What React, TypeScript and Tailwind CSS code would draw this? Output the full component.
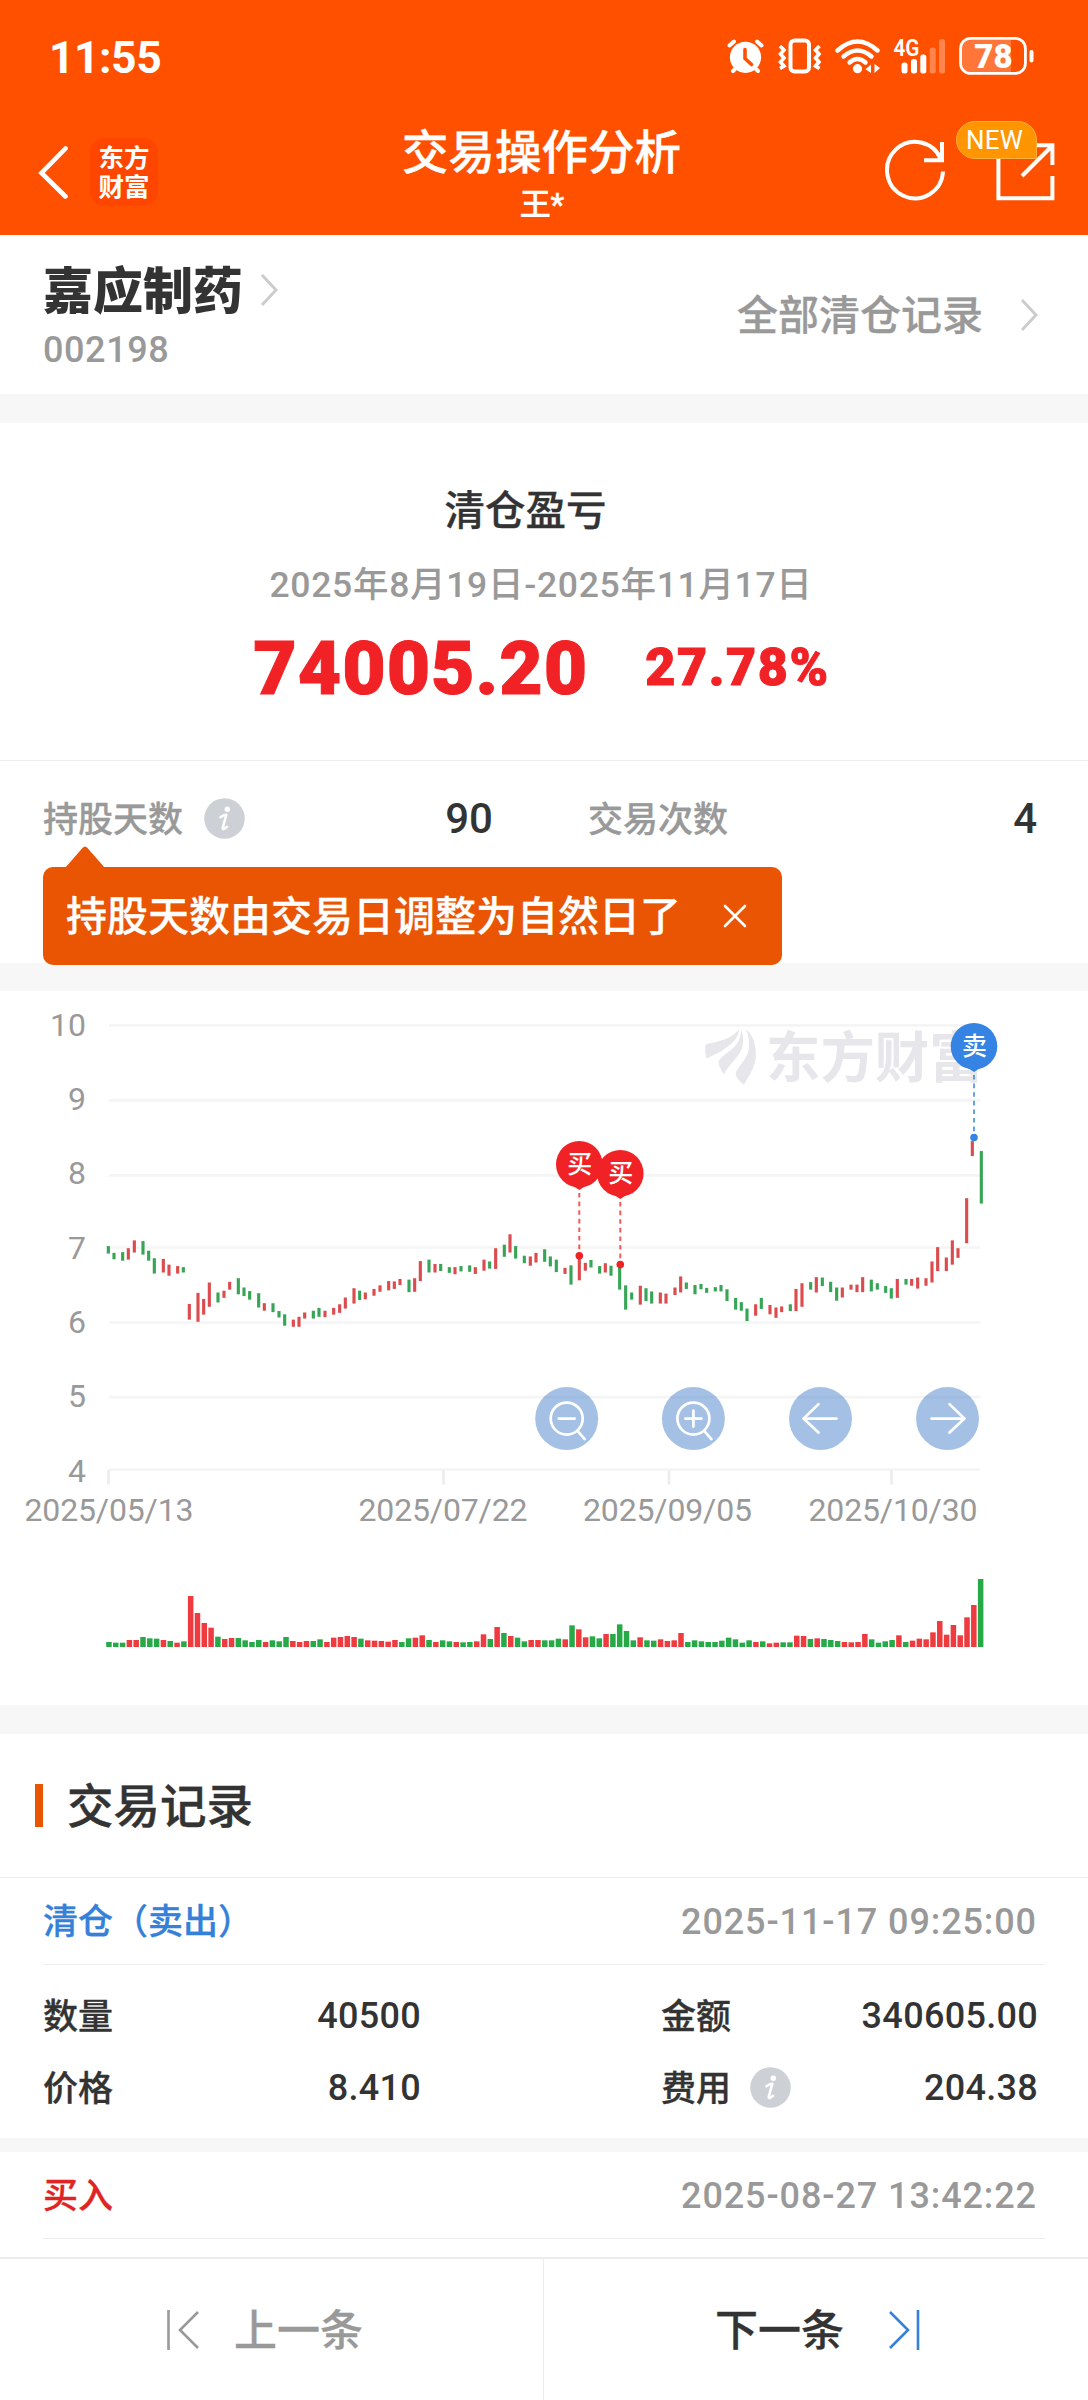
import React from 'react';

// [x, top, bottom, rising] in raw plot units, scaled by the group transform
const candles: [number, number, number, number][] = [
  [325, 745, 766, 0], [342, 764, 782, 0], [368, 762, 786, 0], [385, 751, 783, 1], [403, 729, 763, 1],
  [429, 731, 769, 0], [446, 758, 786, 0], [463, 779, 822, 0], [490, 781, 819, 1], [507, 797, 828, 1],
  [533, 801, 822, 1], [550, 804, 819, 0], [568, 907, 951, 1], [594, 876, 957, 1], [611, 893, 937, 1],
  [628, 847, 915, 1], [654, 875, 903, 0], [672, 870, 890, 1], [689, 845, 867, 1], [715, 835, 880, 0],
  [732, 861, 885, 0], [749, 871, 895, 0], [776, 877, 917, 0], [793, 905, 926, 1], [819, 905, 930, 0],
  [837, 927, 945, 0], [854, 936, 968, 0], [880, 951, 971, 1], [897, 943, 971, 1], [914, 931, 948, 1],
  [940, 926, 948, 0], [957, 918, 943, 0], [975, 926, 944, 1], [1001, 918, 937, 1], [1019, 908, 932, 1],
  [1036, 889, 920, 1], [1062, 863, 906, 1], [1079, 870, 896, 0], [1096, 875, 894, 1], [1122, 865, 884, 1],
  [1140, 855, 873, 1], [1166, 843, 869, 1], [1183, 844, 865, 1], [1200, 837, 854, 1], [1227, 839, 874, 0],
  [1244, 835, 873, 1], [1261, 787, 843, 1], [1287, 783, 819, 0], [1305, 795, 819, 1], [1322, 795, 815, 0],
  [1348, 804, 820, 0], [1365, 804, 824, 1], [1383, 801, 816, 0], [1409, 799, 817, 0], [1426, 804, 823, 1],
  [1452, 783, 814, 1], [1469, 788, 808, 0], [1487, 751, 809, 1], [1513, 741, 775, 0], [1530, 712, 763, 1],
  [1547, 745, 780, 0], [1573, 772, 793, 0], [1591, 774, 800, 1], [1608, 764, 791, 1], [1634, 754, 789, 0],
  [1651, 774, 802, 0], [1669, 783, 818, 0], [1695, 806, 823, 1], [1713, 799, 853, 0], [1738, 772, 841, 1],
  [1756, 792, 814, 1], [1773, 784, 805, 0], [1799, 801, 822, 0], [1816, 793, 819, 1], [1833, 800, 828, 0],
  [1859, 797, 867, 0], [1877, 855, 923, 0], [1895, 875, 895, 0], [1921, 856, 909, 1], [1938, 863, 899, 0],
  [1955, 872, 906, 0], [1981, 875, 906, 1], [1998, 878, 906, 1], [2025, 861, 882, 1], [2042, 830, 875, 1],
  [2059, 847, 865, 0], [2085, 854, 880, 0], [2103, 851, 866, 0], [2120, 862, 876, 0], [2146, 860, 872, 0],
  [2163, 854, 872, 0], [2181, 866, 899, 0], [2207, 890, 923, 0], [2224, 902, 926, 0], [2241, 920, 955, 0],
  [2267, 908, 940, 1], [2284, 890, 921, 0], [2310, 910, 936, 1], [2328, 917, 946, 1], [2345, 914, 930, 1],
  [2371, 908, 927, 0], [2388, 865, 927, 1], [2406, 849, 915, 1], [2432, 846, 867, 0], [2449, 832, 875, 1],
  [2467, 833, 857, 0], [2492, 845, 874, 0], [2510, 861, 898, 0], [2527, 861, 889, 1], [2553, 853, 867, 1],
  [2571, 853, 874, 1], [2588, 832, 874, 1], [2614, 839, 872, 0], [2632, 849, 867, 0], [2657, 857, 876, 0],
  [2674, 863, 892, 0], [2692, 837, 890, 1], [2718, 837, 853, 0], [2735, 837, 856, 1], [2753, 833, 864, 1],
  [2778, 835, 856, 1], [2796, 788, 847, 1], [2813, 748, 815, 1], [2839, 777, 815, 1], [2857, 729, 797, 1],
  [2874, 751, 778, 1], [2900, 611, 737, 1], [2917, 451, 493, 1], [2944, 479, 626, 0],
];

// one entry per trading day, r = rising, g = falling, number = volume
const volumes =
  'g15 g13 g13 r21 r21 g30 g26 g25 r21 g18 r13 g17 r153 r102 r72 r58 g31 r24 r27 g27 g20 g15 g21 r15 g20 g17 g30 r18 r15 r18 g18 g23 r15 r28 r30 r33 r30 g25 r20 r19 r18 r16 r21 g15 g26 r28 r35 g21 r15 g20 g17 r15 g14 g15 r17 r38 g24 r60 g42 r33 g28 g17 r21 r21 g20 g20 g25 r23 g65 r53 r29 g32 g26 r39 g39 g68 g48 g20 r29 g20 g19 r23 r18 r20 r42 g15 g20 g17 g15 g15 g19 g28 g23 g13 g20 r15 g17 r11 r13 g14 g14 r34 r33 g24 r26 g24 g21 g18 r15 r14 r15 r39 g23 g13 g17 g21 r35 g15 r19 r25 r23 r44 r78 r37 r66 r35 r89 r126 g204'
    .split(' ')
    .map((v) => ({ up: v[0] === 'r', value: Number(v.slice(1)) }));

const yAxis = [
  { label: '10', line: 34.4, base: 45 },
  { label: '9', line: 109.4, base: 119 },
  { label: '8', line: 184.4, base: 193 },
  { label: '7', line: 256.5, base: 268 },
  { label: '6', line: 331.5, base: 342 },
  { label: '5', line: 406.1, base: 416 },
  { label: '4', line: 478.6, base: 491 },
];

const xAxis = [
  { label: '2025/05/13', tick: 108.5, x: 109 },
  { label: '2025/07/22', tick: 443.5, x: 443 },
  { label: '2025/09/05', tick: 669, x: 667.5 },
  { label: '2025/10/30', tick: 891.5, x: 893 },
];

// Chinese labels: a touch heavier, and lowered so they centre with the digits
const label = 'pt-[3px] font-medium [-webkit-text-stroke:0.3px]';

function Pin({ x, top, dot, color, text }: { x: number; top: number; dot: number; color: string; text: string }) {
  return (
    <g>
      <line x1={x} x2={x} y1={top + 52} y2={dot - 3} stroke={color} strokeWidth="2" strokeDasharray="4.6 4" opacity="0.75" />
      <circle cx={x} cy={dot} r="3.8" fill={color} />
      <circle cx={x} cy={top + 23.3} r="23.3" fill={color} />
      <path d={`M${x - 17} ${top + 38} L${x} ${top + 49} L${x + 17} ${top + 38}Z`} fill={color} />
      <text x={x + 0.5} y={top + 32.3} textAnchor="middle" fontSize="25" fontWeight="500" fill="#fff">{text}</text>
    </g>
  );
}

function RoundButton({ x, children }: { x: number; children: React.ReactNode }) {
  return (
    <g transform={`translate(${x} 427.6)`}>
      <circle r="31.5" fill="rgba(57,120,199,0.46)" />
      <g fill="none" stroke="#fff" strokeWidth="2.7" strokeLinecap="round" strokeLinejoin="round">{children}</g>
    </g>
  );
}

function PriceChart() {
  return (
    <svg width="1088" height="714" viewBox="0 0 1088 714" className="block">
      {yAxis.map((t) => (
        <g key={t.label}>
          <line x1="109" x2="980.5" y1={t.line} y2={t.line} stroke="#f5f5f5" strokeWidth="2.6" />
          <text x="86" y={t.base} textAnchor="end" fontSize="32" fill="#999">{t.label}</text>
        </g>
      ))}
      {xAxis.map((t) => (
        <g key={t.label}>
          <line x1={t.tick} x2={t.tick} y1="479" y2="493.5" stroke="#ececec" strokeWidth="2.6" />
          <text x={t.x} y="529.7" textAnchor="middle" fontSize="32" fill="#999" textLength="169">{t.label}</text>
        </g>
      ))}

      {/* watermark */}
      <g fill="#e6e6eb">
        <g transform="translate(690 -11) scale(0.33333 0.35714)">
          <path d="M46 184Q48 177 60 177C95 172 130 160 147 138C145 165 122 183 92 200C76 208 62 213 49 220Q44 200 46 184Z" />
          <path d="M153 138C164 165 160 188 148 206C135 224 115 242 101 264C94 252 84 236 86 229C90 217 106 208 124 195C146 178 154 160 153 138Z" />
          <path d="M168 138C190 155 200 185 197 220C192 250 175 272 162 293C150 285 138 274 137 262C140 246 170 225 176 196C179 175 176 155 168 138Z" />
        </g>
        <text x="766" y="86" fontSize="54.4" fontWeight="700">东方财富</text>
      </g>

      <g transform="translate(0 -11) scale(0.33333 0.35714)">
        {candles.map(([x, top, bottom, up]) => (
          <rect key={x} x={x - 4.7} y={top} width="9.4" height={bottom - top} fill={up ? '#dc4b4d' : '#37a556'} />
        ))}
      </g>

      {volumes.map((v, i) => (
        <rect
          key={i}
          x={106.2 + i * 6.81}
          y={656 - v.value / 3}
          width="5.5"
          height={v.value / 3}
          fill={v.up ? '#ee3b3f' : '#28a947'}
        />
      ))}

      <Pin x={579.3} top={150} dot={264.7} color="#f12226" text="买" />
      <Pin x={620.3} top={159} dot={273.6} color="#f12226" text="买" />
      <Pin x={974} top={32} dot={146.5} color="#3583e2" text="卖" />

      <RoundButton x={566.7}>
        <circle r="16" />
        <path d="M-8 0H8M11 12.5L18 20.5" />
      </RoundButton>
      <RoundButton x={693.4}>
        <circle r="16" />
        <path d="M-8 0H8M0 -8V8M11 12.5L18 20.5" />
      </RoundButton>
      <RoundButton x={820.5}>
        <path d="M16 0H-17M-2 -14.5L-17 0L-2 14" />
      </RoundButton>
      <RoundButton x={947.5}>
        <path d="M-16 0H17M2 -14.5L17 0L2 14" />
      </RoundButton>
    </svg>
  );
}

function InfoIcon() {
  return (
    <svg width="41" height="41" viewBox="0 0 41 41" className="-mt-[2px] block shrink-0">
      <circle cx="20.5" cy="20.5" r="20.3" fill="#cdd1d6" />
      <circle cx="23.3" cy="11.2" r="2.7" fill="#fff" />
      <path d="M16.500 19.300Q20 16.500 22.300 16.800L18.800 29.500Q18.200 33 23 28.800" fill="none" stroke="#fff" strokeWidth="2.6" strokeLinecap="round" strokeLinejoin="round" />
    </svg>
  );
}

function Chevron() {
  return (
    <svg width="18" height="34" viewBox="0 0 18 34" className="block">
      <path d="M2 2L16 17L2 32" fill="none" stroke="#ccc" strokeWidth="3" />
    </svg>
  );
}

function StatusIcons() {
  return (
    <svg width="310" height="40" viewBox="725 36 310 40" className="block">
      {/* alarm */}
      <circle cx="745.5" cy="57.3" r="15.6" fill="#fff" />
      <g stroke="#fff" strokeWidth="4" strokeLinecap="round" fill="none">
        <path d="M729.5 45.5L734 41.5M761.5 45.5L757 41.5M733 71L737 67M758 71L754 67" />
        <path d="M745 49.5V58.5L751.5 64.5" stroke="#ff5000" strokeWidth="3.6" />
      </g>
      {/* vibrate */}
      <rect x="790.5" y="40.5" width="18.5" height="31" rx="4" fill="none" stroke="#fff" strokeWidth="4" />
      <path d="M780 46L784 50L780.5 54L784 58L780.5 62L784 66L780 68.5M819.5 46L815.5 50L819 54L815.5 58L819 62L815.5 66L819.5 68.5" fill="none" stroke="#fff" strokeWidth="3.6" />
      {/* wifi */}
      <g fill="none" stroke="#fff" strokeWidth="4.4" strokeLinecap="round">
        <path d="M837.5 50.5Q857.5 32.5 877.5 50.5" />
        <path d="M843.5 56.5Q857.5 44.5 871.5 56.5" />
        <path d="M849.5 62.5Q857.5 55.5 865.5 62.5" />
      </g>
      <circle cx="857.5" cy="68.7" r="4.6" fill="#fff" />
      <path d="M865.5 69.3L871 64.5V73ZM880 68L874.5 64V73Z" fill="#fff" />
      {/* signal */}
      <text x="893.5" y="56" fontSize="23" fontWeight="600" fill="#fff" textLength="26" lengthAdjust="spacingAndGlyphs">4G</text>
      <g fill="#fff">
        <rect x="901.5" y="62.5" width="6" height="11" rx="2.5" />
        <rect x="911" y="59" width="6" height="14.5" rx="2.5" />
        <rect x="920.3" y="54.5" width="6" height="19" rx="2.5" />
        <rect x="929.7" y="47.5" width="6" height="26" rx="2.5" opacity="0.3" />
        <rect x="939" y="39" width="6" height="34.5" rx="2.5" opacity="0.3" />
      </g>
      {/* battery */}
      <path d="M972 40H1011V72H972Q962 72 962 62V50Q962 40 972 40Z" fill="#fff" opacity="0.22" />
      <rect x="960.6" y="38.4" width="64.8" height="35" rx="10" fill="none" stroke="#fff" strokeWidth="2.8" />
      <rect x="1029.5" y="50" width="4" height="12.5" rx="2" fill="#fff" />
      <text x="993.5" y="68" textAnchor="middle" fontSize="33" fontWeight="900" fill="#fff">78</text>
    </svg>
  );
}

function Header() {
  return (
    <header className="h-[235px] bg-[#ff5000] text-white">
      <div className="flex h-[112px] items-center justify-between pr-[53px] pl-[49px]">
        <span className="pt-[4px] text-[44.5px] leading-none font-bold tracking-[-0.5px]">11:55</span>
        <StatusIcons />
      </div>
      <div className="relative flex h-[123px] justify-between pr-[32px] pl-[37px]">
        <div className="flex h-[119px] items-center gap-[22px]">
          <svg width="31" height="54" viewBox="0 0 31 54" className="block">
            <path d="M28.5 3.5L4.5 28L28.5 51.5" fill="none" stroke="#fff" strokeWidth="4.6" strokeLinecap="round" />
          </svg>
          <div className="flex h-[68px] w-[68px] flex-col items-center justify-center rounded-[14px] bg-[#ff4600] pt-[2px] text-[25.5px] leading-[28.5px] font-bold">
            <span>东方</span>
            <span>财富</span>
          </div>
        </div>
        <div className="absolute inset-x-0 top-[13px] flex flex-col items-center [-webkit-text-stroke:0.4px]">
          <h1 className="pr-[5px] text-[46.5px] leading-[56px] font-medium">交易操作分析</h1>
          <div className="pr-[4px] text-[31px] leading-[48px] font-medium">王*</div>
        </div>
        <div className="relative flex items-start pt-[26px]">
          <svg width="172" height="66" viewBox="884 138 172 66" className="block">
            <g fill="none" stroke="#fff" strokeWidth="4">
              <path d="M943 171.5A28 28.2 0 1 1 941 159.5" />
              <path d="M942 142V160.3H924" />
              <path d="M1036 145.3H1052.4V165M1052.4 176V198.3H998.4V150M1022 176L1052 146" />
            </g>
          </svg>
          <span className="absolute top-[9px] left-[72px] flex h-[38px] w-[81px] items-center rounded-[19px] rounded-br-none border border-[#ffb13f] bg-[#ff9500] pl-[9px] text-[26px] leading-none tracking-[0.2px]">
            NEW
          </span>
        </div>
      </div>
    </header>
  );
}

function Field({ name, value, info }: { name: string; value: string; info?: boolean }) {
  return (
    <div className="flex h-[72px] items-center justify-between">
      <div className="flex items-center gap-[19px] text-[35px] leading-none">
        <span className={label}>{name}</span>
        {info && <InfoIcon />}
      </div>
      <span className="text-[36px] leading-none tracking-[0.3px]">{value}</span>
    </div>
  );
}

function RecordHead({ name, time, color }: { name: string; time: string; color: string }) {
  return (
    <div className="mr-[43px] ml-[43px] flex h-[87px] items-center justify-between border-b border-[#ececec] pr-[8px]">
      <span className={`text-[35px] leading-none ${label} ${color}`}>{name}</span>
      <span className="pt-[1px] text-[36px] leading-none font-medium tracking-[0.9px] text-[#999]">{time}</span>
    </div>
  );
}

export default function App() {
  return (
    <div className="h-[2400px] w-[1088px] overflow-hidden bg-white font-['Roboto','Noto_Sans_CJK_SC',sans-serif] text-[#333]">
      <Header />

      <section className="flex h-[159px] justify-between pr-[50px] pl-[43px]">
        <div className="pt-[26px]">
          <div className="flex h-[58px] items-center gap-[17px]">
            <span className="pt-[4px] text-[50px] leading-none font-black">嘉应制药</span>
            <Chevron />
          </div>
          <div className="mt-[13px] text-[36px] leading-[36px] font-medium tracking-[0.6px] text-[#999]">002198</div>
        </div>
        <div className="flex items-center gap-[37px] text-[41px] leading-none text-[#999]">
          <span className={label}>全部清仓记录</span>
          <Chevron />
        </div>
      </section>

      <div className="h-[29px] bg-[#f7f7f7]" />

      <section className="h-[540px]">
        <div className="flex h-[338px] flex-col items-center border-b border-[#ececec] pt-[62px]">
          <h2 className="mr-[37px] text-[40.5px] leading-[52px] font-medium [-webkit-text-stroke:0.3px]">清仓盈亏</h2>
          <div className="mt-[28px] mr-[6px] text-[35.5px] leading-[40px] font-medium tracking-[0.7px] text-[#999]">
            2025年8月19日-2025年11月17日
          </div>
          <div className="mt-[25px] mr-[5px] flex h-[76px] items-center gap-[57px] font-black text-[#f12226] [-webkit-text-stroke:1px]">
            <span className="text-[75px] leading-none tracking-[1px]">74005.20</span>
            <span className="text-[52px] leading-none tracking-[1.6px]">27.78%</span>
          </div>
        </div>
        <div className="relative flex h-[116px] items-center pr-[51px] pl-[43px] text-[35px] leading-none font-medium text-[#999]">
          <div className="flex w-[450px] items-center justify-between">
            <div className="flex items-center gap-[21px]">
              <span className={label}>持股天数</span>
              <InfoIcon />
            </div>
            <span className="text-[42px] text-[#333]">90</span>
          </div>
          <div className="ml-[95px] flex flex-1 items-center justify-between">
            <span className={label}>交易次数</span>
            <span className="text-[42px] text-[#333]">4</span>
          </div>

          {/* hint bubble */}
          <div className="absolute top-[106px] left-[43px] flex h-[98px] w-[739px] items-center justify-between rounded-[10px] bg-[#ea5504] pr-[35px] pl-[23px] text-[41px] text-white">
            <svg width="40" height="22" viewBox="0 0 40 22" className="absolute -top-[21px] left-[22px]">
              <path d="M0 22L17.500 2Q20 -1 22.500 2L40 22Z" fill="#ea5504" />
            </svg>
            <span className={label}>持股天数由交易日调整为自然日了</span>
            <svg width="24" height="24" viewBox="0 0 24 24">
              <path d="M2 2L22 22M22 2L2 22" stroke="#fff" strokeWidth="2.6" strokeLinecap="round" />
            </svg>
          </div>
        </div>
      </section>

      <div className="h-[28px] bg-[#f7f7f7]" />
      <PriceChart />
      <div className="h-[29px] bg-[#f7f7f7]" />

      <section>
        <div className="flex h-[144px] items-center border-b border-[#ececec] pl-[35px]">
          <div className="h-[43px] w-[8px] bg-[#ea5504]" />
          <h2 className="ml-[24px] pt-[4px] text-[46.5px] leading-none font-medium [-webkit-text-stroke:0.4px]">交易记录</h2>
        </div>

        <RecordHead name="清仓（卖出）" time="2025-11-17 09:25:00" color="text-[#3580d8]" />
        <div className="flex h-[173px] justify-between pt-[15px] pr-[50px] pl-[43px] font-medium">
          <div className="w-[378px]">
            <Field name="数量" value="40500" />
            <Field name="价格" value="8.410" />
          </div>
          <div className="w-[377px]">
            <Field name="金额" value="340605.00" />
            <Field name="费用" value="204.38" info />
          </div>
        </div>

        <div className="h-[14px] bg-[#f7f7f7]" />
        <RecordHead name="买入" time="2025-08-27 13:42:22" color="text-[#e02424]" />
      </section>

      <footer className="mt-[18px] flex h-[143px] border-t-2 border-[#ececec] text-[43px] leading-none">
        <div className="flex w-[544px] items-center border-r border-[#ececec] pl-[167px] text-[#999]">
          <svg width="32" height="42" viewBox="0 0 32 42" className="mr-[35px]">
            <path d="M1.500 1V41M31 3L13 21L31 39" fill="none" stroke="#999" strokeWidth="2.6" />
          </svg>
          <span className={label}>上一条</span>
        </div>
        <div className="flex flex-1 items-center pl-[171px]">
          <span className={label}>下一条</span>
          <svg width="32" height="42" viewBox="0 0 32 42" className="ml-[45px]">
            <path d="M29 1V41M1 3L19 21L1 39" fill="none" stroke="#3580d8" strokeWidth="2.6" />
          </svg>
        </div>
      </footer>
    </div>
  );
}
